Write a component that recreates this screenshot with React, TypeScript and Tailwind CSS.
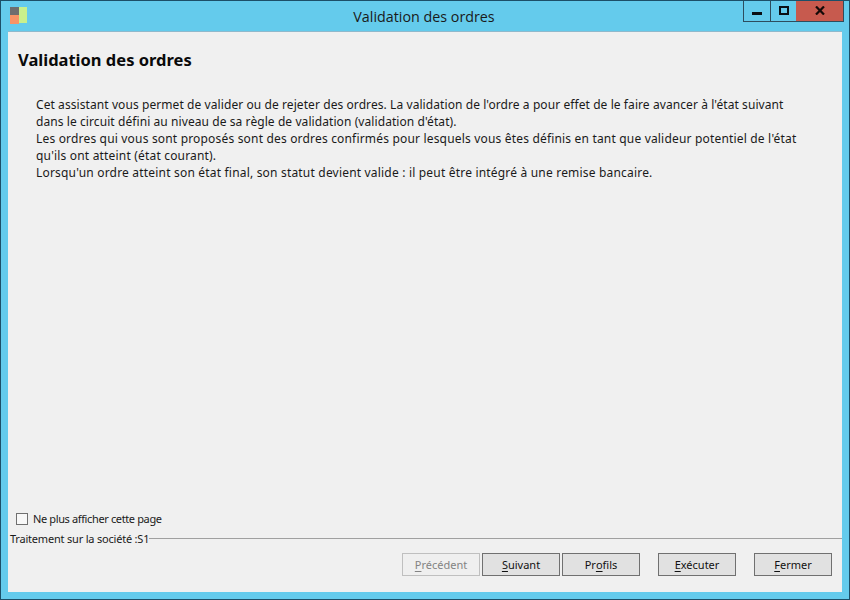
import React from "react";

const tahoma = "font-['Noto_Sans','Liberation_Sans',sans-serif]";

function WizardButton({
  pre,
  mnemonic,
  post,
  disabled,
  className = "",
}: {
  pre?: string;
  mnemonic: string;
  post: string;
  disabled?: boolean;
  className?: string;
}) {
  return (
    <button
      type="button"
      disabled={disabled}
      className={
        "flex h-[23px] w-[78px] items-center justify-center border text-[11px] leading-none " +
        (disabled
          ? "border-[#bfbfbf] bg-[#efefef] text-[#838383] "
          : "border-[#707070] bg-[#e1e1e1] text-[#111] ") +
        className
      }
    >
      {pre}
      <span className="underline underline-offset-2">{mnemonic}</span>
      {post}
    </button>
  );
}

export default function App() {
  return (
    <div className={"flex h-[600px] w-[850px] flex-col border border-[#1c4f68] bg-[#64cbec] " + tahoma}>
      {/* title bar */}
      <div className="flex h-[30px] shrink-0 items-start pl-[9px] pr-[5px]">
        <svg width="17" height="17" viewBox="0 0 17 17" className="mt-[6px] shrink-0">
          <rect x="0" y="0" width="9" height="8" fill="#6e6e6e" />
          <rect x="0" y="8" width="9" height="9" fill="#f79466" />
          <rect x="9" y="0" width="8" height="16" fill="#c8f08c" />
        </svg>
        <div className="flex-1 pl-[78px] pt-[6px] text-center font-['Open_Sans',sans-serif] text-[14.3px] leading-[19px] text-[#1a1a1a]">
          Validation des ordres
        </div>
        <div className="flex h-[21px] shrink-0 border border-t-0 border-[#2d4d5e]">
          <div className="flex w-[27px] items-end justify-center border-r border-[#2d4d5e] pb-[6px]">
            <div className="h-[3px] w-[10px] bg-[#0a0f14]" />
          </div>
          <div className="flex w-[25px] items-center justify-center pb-[2px]">
            <div className="h-[9px] w-[10px] border-2 border-[#0a0f14]" />
          </div>
          <div className="flex w-[47px] items-center justify-center bg-[#c75a4e] pb-[1px]">
            <svg width="10" height="9" viewBox="0 0 10 9">
              <path d="M1 0.5 L9 8.5 M9 0.5 L1 8.5" stroke="#140a08" strokeWidth="2.2" />
            </svg>
          </div>
        </div>
      </div>

      {/* client area */}
      <div className="mx-[7px] mb-[7px] flex min-h-0 flex-1 flex-col border-t border-[#8fb9cc] bg-[#f0f0f0]">
        <h1 className="pl-[10px] pt-[17px] text-[16.5px] font-bold leading-[22px] text-[#0a0a0a]">
          Validation des ordres
        </h1>
        <div className="pl-[28px] pr-[28px] pt-[25px] text-[12px] leading-[17px] text-[#1a1a1a]">
          <p className="tracking-[0.08px]">
            Cet assistant vous permet de valider ou de rejeter des ordres. La validation de l'ordre a pour effet de le
            faire avancer à l'état suivant dans le circuit défini au niveau de sa règle de validation (validation d'état).
          </p>
          <p className="tracking-[0.18px]">
            Les ordres qui vous sont proposés sont des ordres confirmés pour lesquels vous êtes définis en tant que
            valideur potentiel de l'état qu'ils ont atteint (état courant).
          </p>
          <p className="tracking-[0.19px]">
            Lorsqu'un ordre atteint son état final, son statut devient valide : il peut être intégré à une remise bancaire.
          </p>
        </div>

        <div className="mt-auto">
          <label className="flex items-center pl-[8px] text-[11px] leading-[15px] tracking-[-0.37px] text-[#1a1a1a]">
            <span className="mr-[5px] h-[12px] w-[12px] border border-[#707070] bg-[#f8f8f8]" />
            Ne plus afficher cette page
          </label>
          <div className="mt-[5px] flex items-center pl-[2px] text-[11px] leading-[15px] tracking-[-0.2px] text-[#1a1a1a]">
            <span>Traitement sur la société :S1</span>
            <div className="h-px flex-1 bg-[#a0a0a0]" />
          </div>
          <div className="flex justify-end pr-[10px] pt-[7px] pb-[16px]">
            <WizardButton mnemonic="P" post="récédent" disabled />
            <WizardButton mnemonic="S" post="uivant" className="ml-[2px]" />
            <WizardButton pre="Pr" mnemonic="o" post="fils" className="ml-[2px]" />
            <WizardButton mnemonic="E" post="xécuter" className="ml-[18px]" />
            <WizardButton mnemonic="F" post="ermer" className="ml-[18px]" />
          </div>
        </div>
      </div>
    </div>
  );
}
